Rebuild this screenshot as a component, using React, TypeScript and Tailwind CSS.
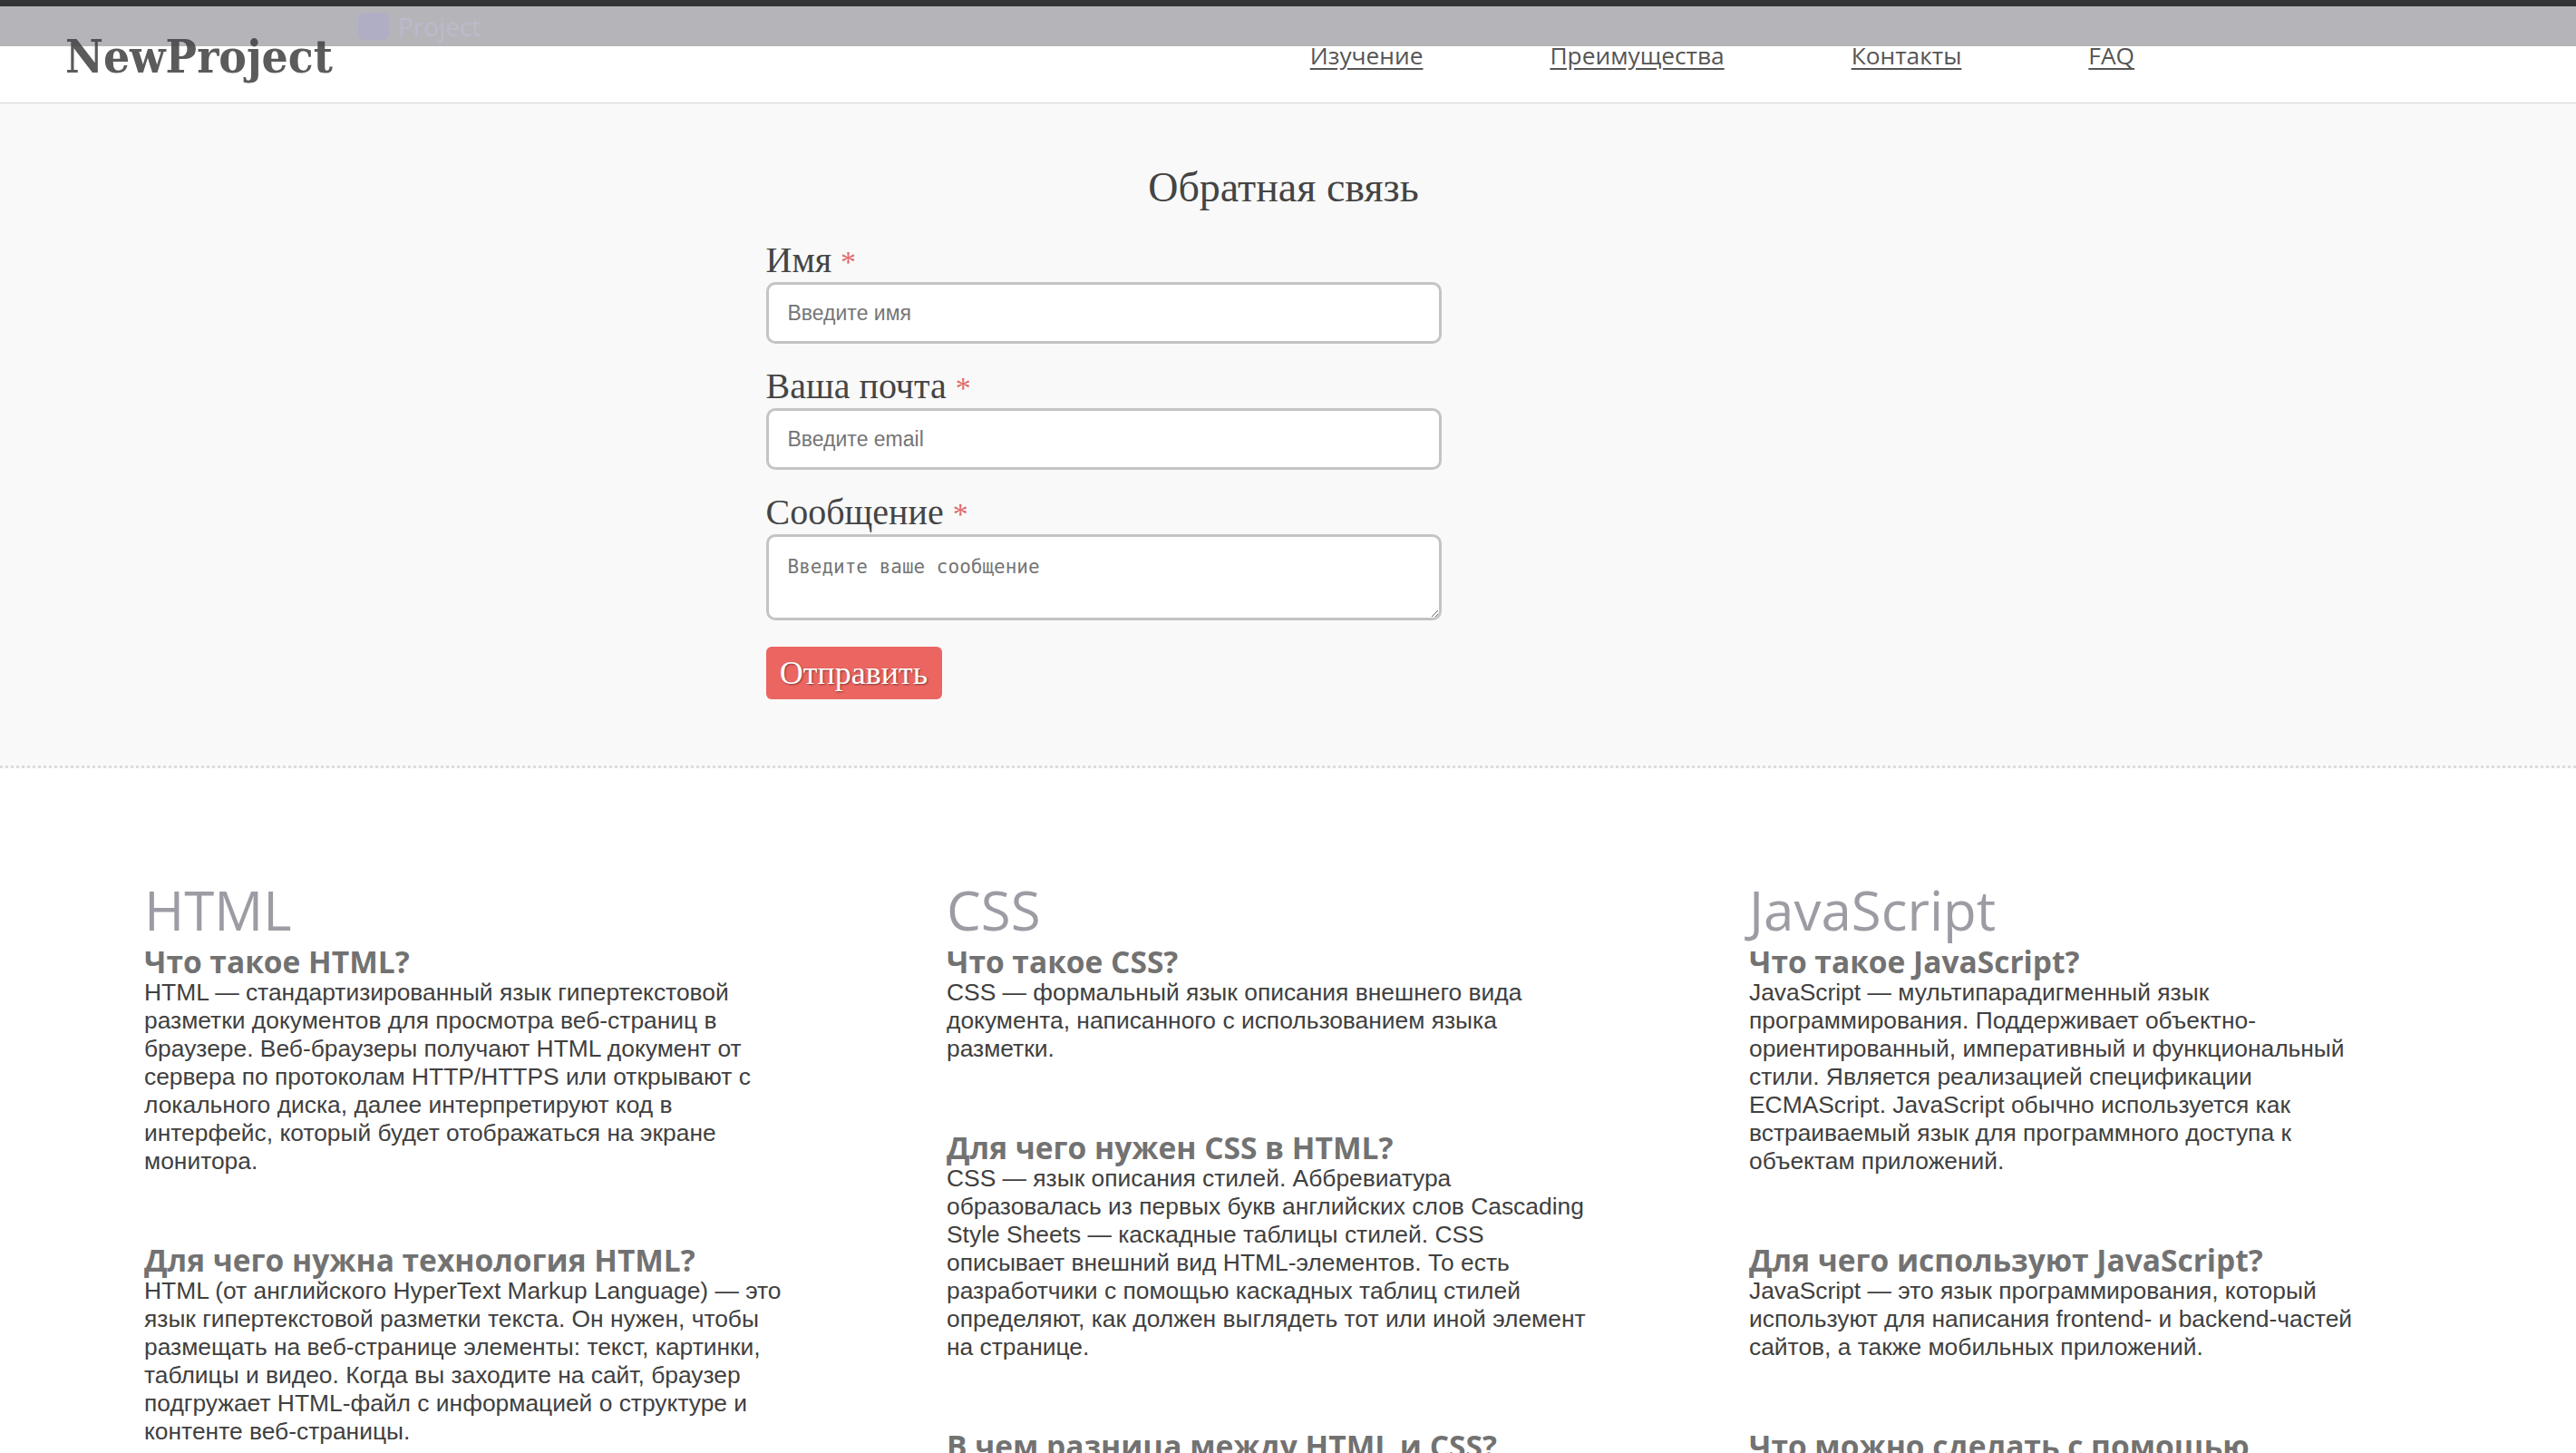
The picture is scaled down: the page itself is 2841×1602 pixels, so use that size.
const columns = [
  {
    title: 'HTML',
    items: [
      {
        q: 'Что такое HTML?',
        a: 'HTML — стандартизированный язык гипертекстовой разметки документов для просмотра веб-страниц в браузере. Веб-браузеры получают HTML документ от сервера по протоколам HTTP/HTTPS или открывают с локального диска, далее интерпретируют код в интерфейс, который будет отображаться на экране монитора.',
      },
      {
        q: 'Для чего нужна технология HTML?',
        a: 'HTML (от английского HyperText Markup Language) — это язык гипертекстовой разметки текста. Он нужен, чтобы размещать на веб-странице элементы: текст, картинки, таблицы и видео. Когда вы заходите на сайт, браузер подгружает HTML-файл с информацией о структуре и контенте веб-страницы.',
      },
      {
        q: 'Из чего состоит HTML-документ?',
        a: 'HTML-документ состоит из элементов, которые задаются тегами. Теги сообщают браузеру, как отображать содержимое страницы.',
      },
    ],
  },
  {
    title: 'CSS',
    items: [
      {
        q: 'Что такое CSS?',
        a: 'CSS — формальный язык описания внешнего вида документа, написанного с использованием языка разметки.',
      },
      {
        q: 'Для чего нужен CSS в HTML?',
        a: 'CSS — язык описания стилей. Аббревиатура образовалась из первых букв английских слов Cascading Style Sheets — каскадные таблицы стилей. CSS описывает внешний вид HTML-элементов. То есть разработчики с помощью каскадных таблиц стилей определяют, как должен выглядеть тот или иной элемент на странице.',
      },
      {
        q: 'В чем разница между HTML и CSS?',
        a: 'HTML задаёт структуру и содержимое страницы, а CSS отвечает за её оформление: цвета, шрифты, отступы и расположение элементов.',
      },
    ],
  },
  {
    title: 'JavaScript',
    items: [
      {
        q: 'Что такое JavaScript?',
        a: 'JavaScript — мультипарадигменный язык программирования. Поддерживает объектно-ориентированный, императивный и функциональный стили. Является реализацией спецификации ECMAScript. JavaScript обычно используется как встраиваемый язык для программного доступа к объектам приложений.',
      },
      {
        q: 'Для чего используют JavaScript?',
        a: 'JavaScript — это язык программирования, который используют для написания frontend- и backend-частей сайтов, а также мобильных приложений.',
      },
      {
        q: 'Что можно сделать с помощью JavaScript?',
        a: 'С помощью JavaScript можно создавать интерактивные элементы, анимации, формы и полноценные веб-приложения.',
      },
    ],
  },
];

const navLinks = ['Изучение', 'Преимущества', 'Контакты', 'FAQ'];

const fields = [
  { label: 'Имя', placeholder: 'Введите имя', type: 'text' },
  { label: 'Ваша почта', placeholder: 'Введите email', type: 'email' },
];

function Label({ text }: { text: string }) {
  return (
    <label className="block font-['Liberation_Serif',serif] text-[40px] leading-[44px] text-[#454545]">
      {text}
      <span className="ml-[10px] text-[34px] text-[#e26a6a]">*</span>
    </label>
  );
}

export default function App() {
  return (
    <div className="relative min-h-screen bg-white font-['Liberation_Sans',Arial,sans-serif]">
      {/* toolbar overlay on top of the page */}
      <div className="pointer-events-none absolute inset-x-0 top-0 z-10">
        <div className="h-[7px] bg-[#333436]" />
        <div className="flex h-[44px] items-center gap-[10px] bg-[#46464f]/40 pl-[395px]">
          <span className="h-[30px] w-[34px] rounded-[6px] bg-[#a9a6d6]/40" />
          <span className="font-['Open_Sans',sans-serif] text-[28px] text-[#c4bfe0]/50">Project</span>
        </div>
      </div>

      {/* Header */}
      <header className="flex h-[114px] items-center justify-between border-b border-[#d6d6d6] pl-[72px] pr-[487px] pt-[11px]">
        <div className="font-['DejaVu_Serif_Condensed','DejaVu_Serif',serif] text-[51px] font-bold text-[#5b5b5b]">
          NewProject
        </div>
        <nav className="flex gap-[140px] font-['Open_Sans',sans-serif] text-[26.3px] text-[#555]">
          {navLinks.map((l) => (
            <a key={l} href="#" className="underline underline-offset-4">
              {l}
            </a>
          ))}
        </nav>
      </header>

      {/* Feedback form */}
      <section className="border-b-[3px] border-dotted border-[#dcdcdc] bg-[#f9f9f9] pb-[73px] pt-[67px]">
        <div className="mx-auto w-[1152px]">
          <h2 className="pr-[10px] text-center font-['Liberation_Serif',serif] text-[46px] leading-[52px] text-[#444]">
            Обратная связь
          </h2>
          <form className="mt-[32px] flex flex-col gap-[25px]">
            {fields.map((f) => (
              <div key={f.label}>
                <Label text={f.label} />
                <input
                  type={f.type}
                  placeholder={f.placeholder}
                  className="block h-[68px] w-[745px] rounded-[10px] border-[3px] border-[#c4c4c4] bg-white px-[21px] text-[23px] placeholder:text-[#757575]"
                />
              </div>
            ))}
            <div>
              <Label text="Сообщение" />
              <textarea
                placeholder="Введите ваше сообщение"
                className="block h-[95px] w-[745px] rounded-[10px] border-[3px] border-[#c4c4c4] bg-white px-[21px] pt-[18px] font-['DejaVu_Sans_Mono',monospace] text-[21px] placeholder:text-[#757575]"
              />
            </div>
            <button
              type="button"
              className="mt-[4px] h-[58px] w-[194px] rounded-[6px] bg-[#eb6561] font-['Liberation_Serif',serif] text-[36px] text-white [text-shadow:1px_1px_2px_rgba(0,0,0,0.45)]"
            >
              Отправить
            </button>
          </form>
        </div>
      </section>

      {/* Articles */}
      <section className="grid grid-cols-[repeat(3,885px)] pl-[159px] pt-[117px]">
        {columns.map((col) => (
          <div key={col.title} className="w-[708px]">
            <h2 className="font-['Open_Sans',sans-serif] text-[60px] leading-[78px] text-[#9d9ca4]">{col.title}</h2>
            {col.items.map((it) => (
              <div key={it.q}>
                <h3 className="font-['Open_Sans',sans-serif] text-[33.5px] font-bold leading-[37px] text-[#727272]">
                  {it.q}
                </h3>
                <p className="mb-[75px] text-[26.4px] leading-[31px] text-[#404040]">{it.a}</p>
              </div>
            ))}
          </div>
        ))}
      </section>
    </div>
  );
}
